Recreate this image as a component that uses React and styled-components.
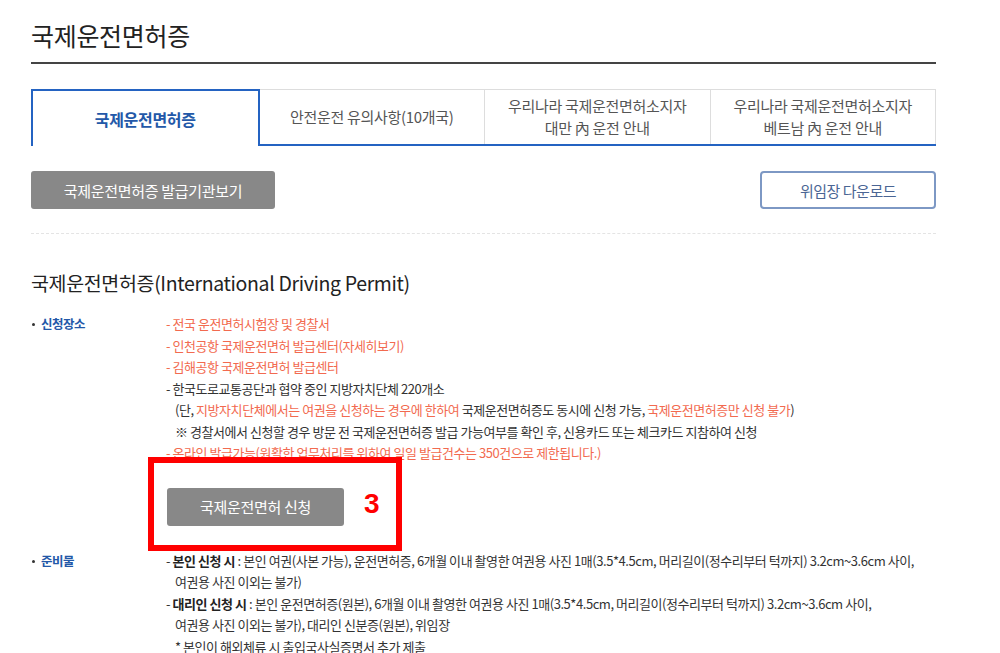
import React from 'react';
import styled, { createGlobalStyle } from 'styled-components';

const GlobalStyle = createGlobalStyle`
  body {
    margin: 0;
    background: #fff;
    font-family: "Noto Sans CJK KR", "Noto Sans", sans-serif;
    color: #333;
  }
`;

const Page = styled.div`
  width: 905px;
  padding: 0 0 0 31px;
`;

const Title = styled.h1`
  margin: 0;
  padding-top: 18px;
  height: 44px;
  font-size: 25px;
  font-weight: 400;
  letter-spacing: -0.3px;
  line-height: 34px;
  color: #222;
  border-bottom: 2px solid #444;
`;

const Tabs = styled.div`
  display: flex;
  margin-top: 25px;
  height: 57px;
  border-bottom: 2px solid #2463c2;
  box-sizing: border-box;
`;

const Tab = styled.div`
  flex: 1;
  display: flex;
  align-items: center;
  justify-content: center;
  text-align: center;
  font-size: ${p => (p.active ? '16px' : '15px')};
  letter-spacing: -0.3px;
  line-height: 22px;
  color: ${p => (p.active ? '#2358a8' : '#555')};
  font-weight: ${p => (p.active ? 700 : 400)};
  border: 1px solid ${p => (p.active ? '#2463c2' : '#ddd')};
  border-left-width: ${p => (p.first || p.active ? '1px' : '0')};
  border-bottom: none;
  background: #fff;
  margin-bottom: ${p => (p.active ? '-2px' : '0')};
  border-width: ${p => (p.active ? '2px 2px 0 2px' : undefined)};
`;

const ButtonRow = styled.div`
  display: flex;
  justify-content: space-between;
  margin-top: 25px;
`;

const GrayButton = styled.button`
  width: ${p => p.w}px;
  height: 38px;
  border: none;
  border-radius: 3px;
  background: #888;
  color: #fff;
  font-family: inherit;
  font-size: 15px;
  letter-spacing: -0.3px;
  cursor: pointer;
`;

const OutlineButton = styled.button`
  width: 176px;
  height: 38px;
  border: 2px solid #7d98c4;
  border-radius: 4px;
  background: #fff;
  color: #4a6594;
  font-family: inherit;
  font-size: 15px;
  letter-spacing: -0.5px;
  cursor: pointer;
`;

const Divider = styled.div`
  margin-top: 24px;
  border-top: 1px dashed #e4e4e4;
`;

const SectionTitle = styled.h2`
  margin: 34px 0 0;
  font-size: 19.5px;
  font-weight: 400;
  letter-spacing: -0.35px;
  line-height: 30px;
  color: #222;
`;

const Item = styled.div`
  display: grid;
  grid-template-columns: 135px 1fr;
  margin-top: ${p => p.top}px;
`;

const Label = styled.div`
  position: relative;
  padding-left: 10px;
  font-size: 12.5px;
  font-weight: 700;
  line-height: 21.5px;
  color: #2358a8;
  letter-spacing: -0.5px;
  &::before {
    content: '';
    position: absolute;
    left: 1px;
    top: 10px;
    width: 3px;
    height: 3px;
    border-radius: 50%;
    background: #333;
  }
`;

const Lines = styled.div`
  font-size: 13px;
  line-height: 21.5px;
  letter-spacing: -0.45px;
  color: #333;
`;

const Line = styled.div`
  padding-left: ${p => (p.indent ? '9px' : '0')};
  color: ${p => (p.red ? '#f26a4f' : '#333')};
  white-space: nowrap;
`;

const Red = styled.span`
  color: #f26a4f;
`;

const Strong = styled.b`
  font-weight: 700;
  color: #222;
`;

const ApplyWrap = styled.div`
  position: relative;
  margin: 24px 0 24px 1px;
`;

const Mark = styled.div`
  position: absolute;
  left: -19px;
  top: -31px;
  width: 254px;
  height: 94px;
  border: 6px solid #ff0000;
  box-sizing: border-box;
  pointer-events: none;
`;

const MarkNumber = styled.span`
  position: absolute;
  left: 210px;
  top: 27px;
  font-family: "Liberation Sans", Arial, sans-serif;
  font-size: 28px;
  font-weight: 700;
  line-height: 28px;
  color: #ff0000;
`;

export default function App() {
  return (
    <>
      <GlobalStyle />
      <Page>
        <Title>국제운전면허증</Title>

        <Tabs>
          <Tab active first>국제운전면허증</Tab>
          <Tab>안전운전 유의사항(10개국)</Tab>
          <Tab>우리나라 국제운전면허소지자<br />대만 內 운전 안내</Tab>
          <Tab>우리나라 국제운전면허소지자<br />베트남 內 운전 안내</Tab>
        </Tabs>

        <ButtonRow>
          <GrayButton w={244}>국제운전면허증 발급기관보기</GrayButton>
          <OutlineButton>위임장 다운로드</OutlineButton>
        </ButtonRow>

        <Divider />

        <SectionTitle>국제운전면허증(International Driving Permit)</SectionTitle>

        <Item top={15}>
          <Label>신청장소</Label>
          <Lines>
            <Line red>- 전국 운전면허시험장 및 경찰서</Line>
            <Line red>- 인천공항 국제운전면허 발급센터(자세히보기)</Line>
            <Line red>- 김해공항 국제운전면허 발급센터</Line>
            <Line>- 한국도로교통공단과 협약 중인 지방자치단체 220개소</Line>
            <Line indent>
              (단, <Red>지방자치단체에서는 여권을 신청하는 경우에 한하여</Red> 국제운전면허증도 동시에 신청 가능, <Red>국제운전면허증만 신청 불가</Red>)
            </Line>
            <Line indent>※ 경찰서에서 신청할 경우 방문 전 국제운전면허증 발급 가능여부를 확인 후, 신용카드 또는 체크카드 지참하여 신청</Line>
            <Line red>- 온라인 발급가능(원활한 업무처리를 위하여 일일 발급건수는 350건으로 제한됩니다.)</Line>
            <ApplyWrap>
              <GrayButton w={177}>국제운전면허 신청</GrayButton>
              <Mark>
                <MarkNumber>3</MarkNumber>
              </Mark>
            </ApplyWrap>
          </Lines>
        </Item>

        <Item top={0}>
          <Label>준비물</Label>
          <Lines>
            <Line>- <Strong>본인 신청 시</Strong> : 본인 여권(사본 가능), 운전면허증, 6개월 이내 촬영한 여권용 사진 1매(3.5*4.5cm, 머리길이(정수리부터 턱까지) 3.2cm~3.6cm 사이,</Line>
            <Line indent>여권용 사진 이외는 불가)</Line>
            <Line>- <Strong>대리인 신청 시</Strong> : 본인 운전면허증(원본), 6개월 이내 촬영한 여권용 사진 1매(3.5*4.5cm, 머리길이(정수리부터 턱까지) 3.2cm~3.6cm 사이,</Line>
            <Line indent>여권용 사진 이외는 불가), 대리인 신분증(원본), 위임장</Line>
            <Line indent>* 본인이 해외체류 시 출입국사실증명서 추가 제출</Line>
          </Lines>
        </Item>
      </Page>
    </>
  );
}
